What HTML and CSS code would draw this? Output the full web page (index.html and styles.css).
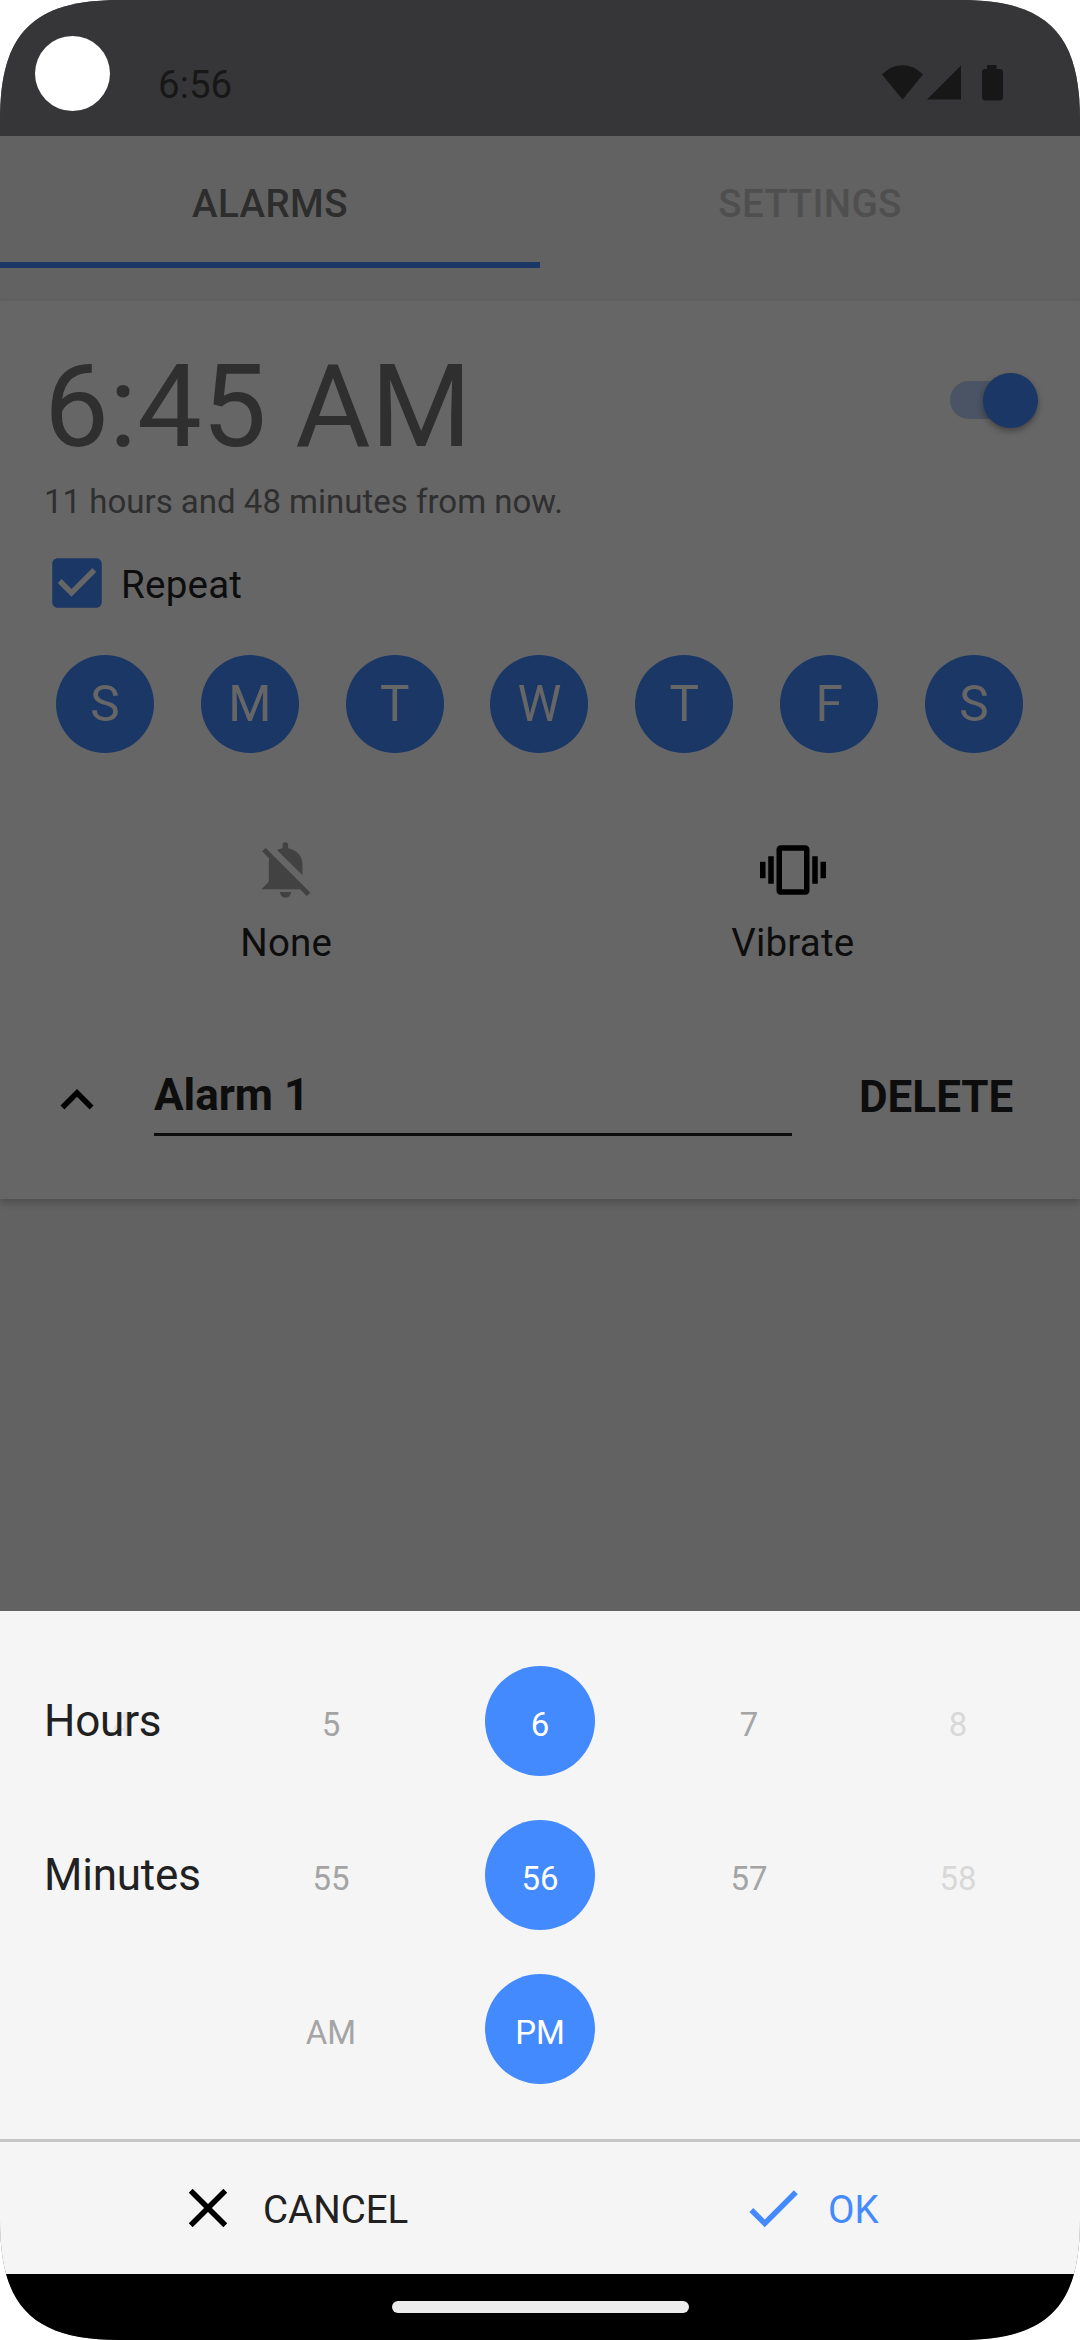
FILE: index.html
```html
<!DOCTYPE html>
<html lang="en">
<head>
<meta charset="utf-8">
<title>Alarms</title>
<link rel="stylesheet" href="styles.css">
</head>
<body>
<div class="phone">
  <header class="status">
    <span class="camera"></span>
    <span class="clock">6:56</span>
    <svg class="status-icons" width="121" height="36" viewBox="0 0 121 36">
      <path d="M0 9.5Q9 .3 20.5 .3T41 9.5L20.5 34.5Z"/>
      <path d="M45 34.5L79 .5V34.500Z"/>
      <path d="M105 0h9.500v4h3.500q3 0 3 3v25.500q0 3-3 3h-15q-3 0-3-3V7q0-3 3-3h2z"/>
    </svg>
  </header>

  <nav class="tabs">
    <div class="tab tab-active">ALARMS</div>
    <div class="tab">SETTINGS</div>
  </nav>

  <main class="content">
    <section class="card">
      <div class="card-head">
        <div>
          <div class="time">6:45 AM</div>
          <div class="remaining">11 hours and 48 minutes from now.</div>
        </div>
        <div class="switch"><span class="thumb"></span></div>
      </div>

      <div class="repeat">
        <svg width="66" height="66" viewBox="0 0 24 24"><path d="M19 3H5c-1.110 0-2 .9-2 2v14c0 1.100.89 2 2 2h14c1.110 0 2-.9 2-2V5c0-1.100-.89-2-2-2zm-9 14l-5-5 1.410-1.410L10 14.170l7.590-7.590L19 8l-9 9z"/></svg>
        <span>Repeat</span>
      </div>

      <div class="days">
        <span>S</span><span>M</span><span>T</span><span>W</span><span>T</span><span>F</span><span>S</span>
      </div>

      <div class="options">
        <div class="option">
          <svg class="muted" width="66" height="66" viewBox="0 0 66 66">
            <path d="M24 13Q26.500 11.700 29.500 11.200V8a2.800 2.800 0 0 1 5.600 0v3.200C43.500 12.500 49.500 19 49.500 27.500V38.300Z"/>
            <path d="M12.700 11L57.500 55.700 53.700 59 47.100 52.300H8.500L15.800 44.800V27.500Q15.800 24.500 16.200 21.500L9.200 14.300Z"/>
            <path d="M26.800 55h11.400q-.7 5.700-5.700 5.700T26.800 55Z"/>
          </svg>
          <span>None</span>
        </div>
        <div class="option">
          <svg width="66" height="66" viewBox="0 0 24 24"><path d="M0 15h2V9H0v6zm3 2h2V7H3v10zm19-8v6h2V9h-2zm-3 8h2V7h-2v10zM16.500 3h-9C6.670 3 6 3.670 6 4.500v15c0 .83.67 1.500 1.500 1.500h9c.83 0 1.500-.67 1.500-1.500v-15c0-.83-.67-1.500-1.500-1.500zM16 19H8V5h8v14z"/></svg>
          <span>Vibrate</span>
        </div>
      </div>

      <div class="card-foot">
        <svg width="66" height="66" viewBox="0 0 24 24"><path d="M12 8l-6 6 1.410 1.410L12 10.830l4.590 4.580L18 14z"/></svg>
        <div class="name">Alarm 1</div>
        <div class="delete">DELETE</div>
      </div>
    </section>
  </main>

  <section class="sheet">
    <div class="pickers">
      <div class="picker">
        <span class="picker-label">Hours</span>
        <span class="value ghost">4</span><span class="value before">5</span><span class="value selected">6</span><span class="value after">7</span><span class="value far">8</span>
      </div>
      <div class="picker">
        <span class="picker-label">Minutes</span>
        <span class="value before">55</span><span class="value selected">56</span><span class="value after">57</span><span class="value far">58</span>
      </div>
      <div class="picker">
        <span class="value before">AM</span><span class="value selected">PM</span>
      </div>
    </div>
    <div class="actions">
      <div class="action cancel">
        <svg width="66" height="66" viewBox="0 0 24 24"><path d="M19 6.410L17.590 5 12 10.590 6.410 5 5 6.410 10.590 12 5 17.590 6.410 19 12 13.410 17.590 19 19 17.590 13.410 12z"/></svg>
        <span>CANCEL</span>
      </div>
      <div class="action ok">
        <svg width="66" height="66" viewBox="0 0 24 24"><path d="M9 16.170L4.830 12l-1.420 1.410L9 19 21 7l-1.410-1.410z"/></svg>
        <span>OK</span>
      </div>
    </div>
  </section>

  <footer class="navbar"><span class="handle"></span></footer>
</div>
</body>
</html>
```
FILE: styles.css
```css
* { box-sizing: border-box; }

html { background: #fff; }

body {
  margin: 0;
  font-family: Roboto, sans-serif;
  font-size: 38.5px;
  color: #0d0d0d;
}

svg { display: block; flex: none; }

.phone {
  display: flex;
  flex-direction: column;
  width: 1080px;
  height: 2340px;
  overflow: hidden;
  background: #626262;
  clip-path: path("M120 0H960C1047 0 1080 33 1080 120V2220C1080 2307 1047 2340 960 2340H120C33 2340 0 2307 0 2220V120C0 33 33 0 120 0Z");
}

/* Status bar */
.status {
  display: flex;
  align-items: flex-start;
  height: 136px;
  padding: 36px 77px 0 35px;
  background: #363638;
  color: #171717;
}

.camera {
  width: 75px;
  height: 75px;
  border-radius: 50%;
  background: #fff;
}

.clock {
  margin: 29px auto 0 48px;
  line-height: 40px;
}

.status-icons { margin-top: 29px; fill: #171717; }

/* Tabs */
.tabs {
  display: flex;
  height: 165px;
}

.tab {
  flex: 1;
  height: 132px;
  padding-top: 48px;
  line-height: 40px;
  font-weight: 500;
  letter-spacing: .4px;
  text-align: center;
  color: #4f4f4f;
}

.tab-active {
  color: #2d2d2d;
  border-bottom: 6px solid #1b3766;
}

/* Alarm card */
.content { height: 1310px; }

.card {
  height: 898px;
  padding: 38px 44px 0;
  background: #666;
  box-shadow: 0 4px 7px rgba(0, 0, 0, .2);
}

.card-head {
  display: flex;
  justify-content: space-between;
  color: #2f2f2f;
}

.time {
  height: 135px;
  line-height: 135px;
  font-size: 115.5px;
}

.remaining {
  margin-top: 8px;
  line-height: 39px;
  font-size: 33px;
}

.switch {
  display: flex;
  align-items: center;
  justify-content: flex-end;
  width: 86px;
  height: 38px;
  margin-top: 42px;
  border-radius: 19px;
  background: #4a5464;
}

.thumb {
  flex: none;
  width: 55px;
  height: 55px;
  margin-right: -2px;
  border-radius: 50%;
  background: #1b3766;
  box-shadow: 0 3px 6px rgba(0, 0, 0, .35);
}

.repeat {
  display: flex;
  align-items: center;
  gap: 11px;
  height: 66px;
  margin-top: 29px;
  letter-spacing: .25px;
}

.repeat svg { fill: #1b3766; }
.repeat span { padding-top: 3px; line-height: 40px; }

.days {
  display: flex;
  justify-content: space-between;
  margin: 39px 13px 0 12px;
}

.days span {
  width: 98px;
  height: 98px;
  border-radius: 50%;
  background: #1b3766;
  color: #666;
  font-size: 49.5px;
  line-height: 98px;
  text-align: center;
}

.options {
  display: flex;
  margin: 84px -10px 0 -11px;
}

.option {
  flex: 1;
  display: flex;
  flex-direction: column;
  align-items: center;
  gap: 18px;
  line-height: 44px;
  letter-spacing: .2px;
}

.muted { fill: #424242; }

.card-foot {
  display: flex;
  align-items: flex-start;
  margin-top: 102px;
  font-size: 44px;
  font-weight: 700;
}

.name {
  width: 638px;
  height: 69px;
  margin-left: 44px;
  border-bottom: 3px solid #0d0d0d;
  line-height: 56px;
}

.delete {
  margin-left: 67px;
  line-height: 60px;
}

/* Time picker sheet */
.sheet {
  height: 663px;
  background: #f5f5f5;
  color: #212121;
}

.pickers {
  display: grid;
  gap: 44px;
  height: 528px;
  padding: 55px 17.5px 0;
  align-content: start;
}

.picker {
  display: grid;
  grid-template-columns: repeat(5, 209px);
  grid-template-rows: 110px;
  justify-items: center;
}

.picker-label {
  grid-area: 1 / 1;
  z-index: 1;
  justify-self: start;
  padding-left: 26.5px;
  font-size: 44px;
  line-height: 110px;
  letter-spacing: -.2px;
}

.value {
  grid-row: 1;
  width: 110px;
  height: 110px;
  padding-top: 8px;
  font-size: 33px;
  line-height: 102px;
  text-align: center;
  color: #a4a4a4;
}

.ghost { grid-column: 1; color: #e6e6e6; }
.before { grid-column: 2; }
.selected { grid-column: 3; }
.after { grid-column: 4; }
.far { grid-column: 5; color: #d8d8d8; }

.selected {
  border-radius: 50%;
  background: #448aff;
  color: #fff;
}

.actions {
  display: flex;
  height: 135px;
  border-top: 3px solid #c6c6c6;
}

.action {
  width: 540px;
  display: flex;
  align-items: center;
  gap: 22px;
}

.action span { padding-top: 4px; line-height: 40px; }
.cancel { padding-left: 175px; }
.cancel svg { fill: #000; }
.ok { padding-left: 200px; color: #448aff; fill: #448aff; }

/* Gesture bar */
.navbar {
  display: flex;
  justify-content: center;
  height: 66px;
  padding-top: 27px;
  background: #000;
}

.handle {
  width: 297px;
  height: 12px;
  border-radius: 6px;
  background: #ececec;
}
```
